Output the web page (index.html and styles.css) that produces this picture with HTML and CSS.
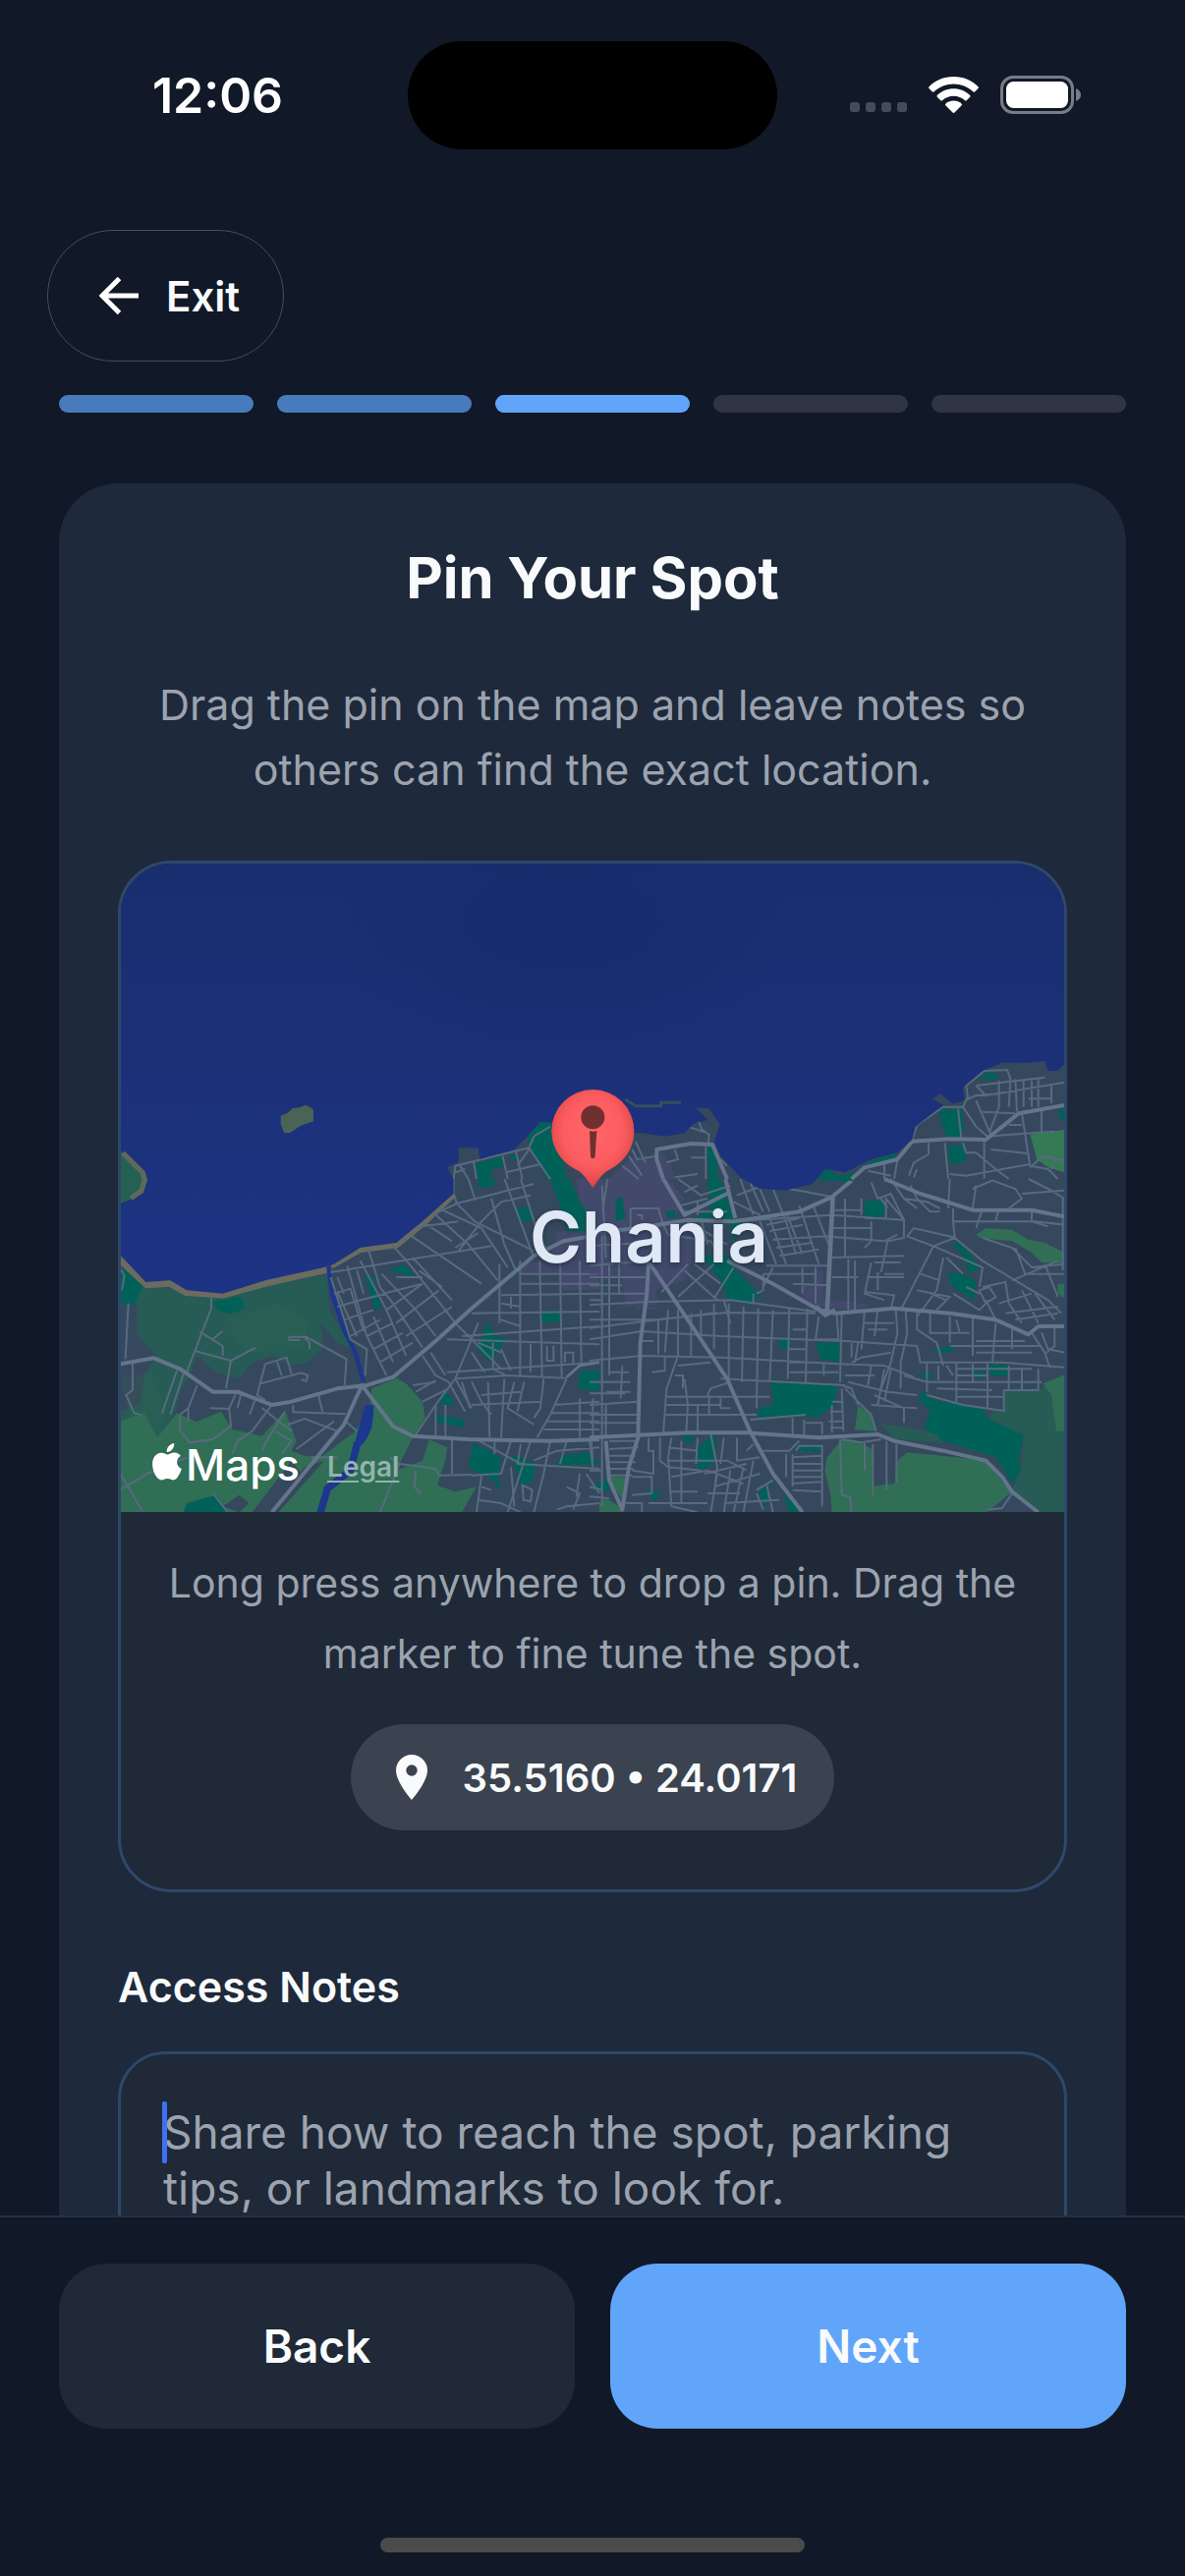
FILE: index.html
```html
<!DOCTYPE html>
<html lang="en">
<head>
<meta charset="utf-8">
<meta name="viewport" content="width=device-width, initial-scale=1">
<title>Pin Your Spot</title>
<link rel="stylesheet" href="styles.css">
</head>
<body>
<div class="app">
  <div class="status">
    <div class="status-time">12:06</div>
    <div class="island"></div>
    <div class="status-icons">
      <svg class="cell" viewBox="0 0 58 10" aria-hidden="true"><g fill="#454b59"><rect width="10" height="10" rx="3"/><rect x="16" width="10" height="10" rx="3"/><rect x="32" width="10" height="10" rx="3"/><rect x="48" width="10" height="10" rx="3"/></g></svg>
      <svg class="wifi" viewBox="0 0 51 37" aria-hidden="true"><g fill="#fff"><path d="M25.500 0C35.500 0 44.500 4 50.500 10.200Q51.300 11 50.500 11.900L47 15.400Q46.200 16.100 45.300 15.300C40 10.300 33 7.400 25.500 7.400S11 10.300 5.700 15.300Q4.800 16.100 4 15.400L.5 11.900Q-.3 11 .5 10.200C6.500 4 15.500 0 25.500 0Z"/><path d="M25.500 12.300C32 12.300 38 14.900 42.200 19Q43 19.900 42.200 20.700L38.700 24.200Q37.900 24.900 37 24.200C33.900 21.400 29.900 19.700 25.500 19.700S17.100 21.400 14 24.200Q13.100 24.900 12.300 24.200L8.800 20.700Q8 19.900 8.800 19C13 14.900 19 12.300 25.500 12.300Z"/><path d="M25.500 24.500C28.600 24.500 31.500 25.700 33.700 27.700Q34.500 28.500 33.700 29.300L26.500 36.500Q25.500 37.300 24.500 36.500L17.300 29.300Q16.500 28.500 17.300 27.700C19.500 25.700 22.400 24.500 25.500 24.500Z"/></g></svg>
      <svg class="battery" viewBox="0 0 82 39" aria-hidden="true"><rect x="1.500" y="1.500" width="72" height="36" rx="11.500" fill="none" stroke="#777c87" stroke-width="3"/><rect x="6" y="6" width="63" height="27" rx="7.500" fill="#fff"/><path d="M77 13Q82 15 82 19.500T77 26Z" fill="#777c87"/></svg>
    </div>
  </div>

  <header class="topbar">
    <button class="exit" type="button">
      <svg viewBox="0 0 40 40" aria-hidden="true"><path d="M40 20H4M20.500 2.500 3 20l17.500 17.500" fill="none" stroke="#fff" stroke-width="5"/></svg>
      Exit
    </button>
  </header>

  <ol class="steps" aria-label="Step 3 of 5">
    <li class="step step-done"></li>
    <li class="step step-done"></li>
    <li class="step step-current"></li>
    <li class="step"></li>
    <li class="step"></li>
  </ol>

  <main class="scroll">
    <section class="card">
      <h1 class="title">Pin Your Spot</h1>
      <p class="lead">Drag the pin on the map and leave notes so others can find the exact location.</p>

      <div class="picker">
        <div class="map">
          <svg class="map-art" viewBox="0 0 2880 1980" preserveAspectRatio="xMidYMid slice" role="img" aria-label="Map of Chania">
            <defs>
              <linearGradient id="sea" x1="0" y1="0" x2="0" y2="1"><stop offset="0" stop-color="#192e6e"/><stop offset=".3" stop-color="#1c3078"/><stop offset=".65" stop-color="#1d3484"/><stop offset="1" stop-color="#1c368c"/></linearGradient>
              <radialGradient id="deep"><stop offset="0" stop-color="#152b6a" stop-opacity=".8"/><stop offset="1" stop-color="#152b6a" stop-opacity="0"/></radialGradient>
              <radialGradient id="pin" cx=".5" cy=".42" r=".6"><stop offset="0" stop-color="#ff6668"/><stop offset=".6" stop-color="#fc5c60"/><stop offset="1" stop-color="#d9413f"/></radialGradient>
              <clipPath id="land"><path d="M0 1198 76 1278 151 1273 201 1303 311 1313 441 1273 621 1233 651 1223 731 1173 841 1158 921 1093 1016 1008V963L996 928 1031 913V868H1091L1096 903 1201 873 1251 823 1281 788 1321 793 1480 760 1566 823 1591 823 1661 833 1721 823 1751 793 1791 783 1756 745 1796 748 1829 798 1811 848 1831 893 1891 958 1951 993 2031 998 2111 978 2151 933 2211 943 2291 903 2371 883 2416 843 2426 803 2491 753 2511 738 2479 718 2501 703 2541 733 2576 723 2571 683 2631 633 2691 608 2771 608 2821 603 2831 633 2861 633 2880 613V1980H0Z"/></clipPath>
            </defs>
            <rect width="2880" height="1980" fill="url(#sea)"/>
            <ellipse cx="1350" cy="200" rx="700" ry="400" fill="url(#deep)"/>
            <path d="M488 770 508 762 525 747 545 745 565 737 588 750V787L550 800 515 823 498 822 488 796Z" fill="#4b6257"/>
            <path d="M0 877 68 940V1000L30 1025 0 1038Z" fill="#256052"/><path d="M6 884 66 943 73 965 62 1000 30 1022" fill="none" stroke="#5d6a59" stroke-width="16"/>
            <path d="M1540 720 1572 740H1649V730H1711" fill="none" stroke="#35505e" stroke-width="9"/>
            <g clip-path="url(#land)">
              <rect width="2880" height="1980" fill="#36485d"/>
              <g transform="translate(-39 963)">
                <path fill="#275b55" d="M38 290 110 320 240 345 350 355 500 320 668 292 676 400 700 440 745 520 700 500 650 440 655 520 610 560 560 570 500 540 440 560 400 610 330 590 270 540 250 600 225 640 200 720 150 790 105 740 38 740 38 710 100 690 110 600 150 540 90 480 90 380 38 360Z"/>
                <path fill="#30704f" fill-opacity=".2" d="M350 430 520 380 610 430 600 520 420 530ZM40 600 130 590 180 700 150 780 60 720Z"/>
                <path fill="#306e56" d="M38 740 110 715 150 788 210 715 270 742 345 710 380 765 470 785 540 708 560 760 575 800 560 830 600 845 650 850 755 770 800 700 805 640 880 608 910 625 960 680 968 730 930 790 880 890 960 860 980 795 1035 820 1030 860 1005 935 1060 955 1125 940 1080 1018H490L590 900 560 860 440 1018H38Z"/>
                <path fill="#36485d" d="M600 880 660 860 520 1018H490ZM350 1000 400 965 430 990 400 1018Z"/>
                <path fill="#006159" d="M38 275 80 285 105 330 80 385 38 380ZM320 375 405 358 418 395 375 412 335 402ZM240 990 330 965 365 1018H230ZM785 298 810 295 835 395 815 402ZM850 278 905 262 940 300ZM1245 90 1295 85 1300 130 1250 130ZM1130 0H1185L1175 25H1130ZM1350 0H1410L1440 70 1500 110V170L1400 165 1380 80ZM1320 405 1390 400 1385 435 1325 440ZM1160 435 1185 480 1215 485 1170 560 1125 520ZM1030 642 1060 690 1010 690ZM1005 720 1090 735 1085 760 1005 742ZM1115 805 1200 850 1190 930 1100 880ZM1230 840 1310 870 1290 930 1260 935ZM1440 585H1500V648L1435 640ZM1380 845 1470 835 1500 870 1370 875ZM1170 900 1210 950 1185 940Z"/>
                <path fill="#474a70" opacity=".75" d="M1430 0H1500V340H1380V290H1260V255H1350L1370 160H1500L1440 70Z"/>
                <path fill="none" stroke="#6b6b60" stroke-width="34" d="M38 240 120 316 190 312 240 340 350 347 480 312 600 285 680 268"/>
                <path fill="none" stroke="#6b6b60" stroke-width="22" d="M680 264 770 214 880 200 960 135 1055 45"/>
                <path fill="none" stroke="#1c378f" stroke-width="13" d="M672 262 684 350 720 460 755 530 780 620"/>
                <path fill="none" stroke="#1c378f" stroke-width="22" d="M800 690Q800 780 760 810L740 890 670 945 648 1020"/>
                <path fill="#1c378f" d="M785 690H805V760L775 800H755Z"/>
                <g class="minor">
                  <path d="M62 380 53 550M75 560V645L55 660 80 715 100 720M38 275 50 295 42 340M315 360V395L265 525 240 590M265 525 375 555 450 515M375 555 360 640M280 467 318 490 350 465M318 490 350 510V540M210 585 165 715M230 595 190 720M272 630 245 700V740M245 700 220 720V770L250 805 320 795 375 755 370 700 390 655M310 700 370 702M405 660 395 700M450 670 432 720M500 690 440 770 395 800 380 840M470 700 560 770M600 480 728 550 722 630M600 482H553V492H585M600 485 615 500V520M480 565 545 545 560 595M480 565 455 660 480 675M465 625 590 592 610 600 605 618 590 612M515 555 530 600M565 690V712L725 718M640 652 655 712M550 750 600 732 700 770 650 830M575 825 690 740M540 710 490 790 470 830M510 770 560 800 530 840M38 900 105 1015M38 950 120 900 240 850M320 960 365 1018M725 740 760 770M830 1018 890 870 860 850M890 870 1000 885 1010 905 1110 903M940 890 935 940 955 960M620 850H700"/>
                  <path d="M680 285 1170 205M690 350 740 335 780 465M700 345 760 480M730 265 790 480 850 600M770 250 850 400 880 470 910 540M795 215 830 330 870 380 930 470 960 515M835 290 940 400 1000 480M870 205 920 260 990 350 1060 440M880 300 960 300M930 240 1050 370M920 170 1140 320M990 100 1100 200 1190 310M1010 90 1140 150 1220 270M1060 70 1120 130 1180 160 1300 220M1055 0V45L1065 75 1300 15M1100 0 1120 60M1170 60 1210 200 1245 280M1210 0 1240 80 1300 240M1260 0 1310 160 1345 230M1065 75 1010 100M900 190 920 150 1070 130M960 130 1050 190M1130 140 1200 70 1290 50M1070 220 1140 130M1130 165 1060 210M700 390 770 370 850 350M720 430 810 400M740 480 830 430M790 480 870 440M810 520 900 470M830 560 930 500M850 400 960 320M880 440 1010 340M910 480 1050 390M950 280 1020 330M810 420 870 560M840 350 960 320M700 300 720 350M760 280 780 350M680 300 740 490 790 520 785 600"/>
                  <path d="M1195 260V440M1258 250V600M1318 250 1325 605M1380 250 1385 605M1440 250 1445 560M1260 290H1500M1260 320H1500M1200 355 1500 350M1110 410 1500 405M1080 480 1500 450M1035 490 1500 505M1200 380 1260 390M1230 360V395M1200 430 1260 450M1060 610 1220 600 1400 608M1035 590 1500 560M1175 500V580L1215 600M1200 520 1230 585M1290 505V590M1340 510V555H1360V510M1395 560V530H1420V565M1130 440 1060 610 1000 690 940 780M1060 440 1200 580M1130 500 1200 530M1110 530 1150 590M960 540 1000 600 1040 620 1090 710M985 530 1030 600M1000 620 930 630M940 650 1000 615M960 680 1040 640M1060 610 1110 700M1080 620 1105 700M1110 620 1140 680 1170 720M1160 620 1165 790M1210 610 1200 790M1240 620 1220 700 1300 750M1270 620 1250 710M1330 610 1320 700 1300 730M1140 660 1260 650M1110 690 1320 680M1000 690V790M1030 690V785M1400 610 1350 720 1310 790M1350 715H1500M1340 740H1500M1330 765H1500M1360 690 1500 680M1440 670V790M1480 670V790"/>
                  <path d="M1050 790V900M1115 790 1260 870M1180 800V840M1230 800 1200 900 1110 905M1260 810 1250 870 1500 885M1290 800 1220 1018M1350 800 1330 900 1300 1018M1300 860 1370 830 1500 820M1400 800 1380 870M1470 800 1480 880M1140 905 1125 1018M1140 940 1170 950M1130 980 1200 990 1260 1018M1230 880 1240 1000M1265 935 1295 950 1290 985 1268 980ZM1400 940 1440 960 1420 1010M1370 1010 1400 1000 1500 990M1440 900 1430 970M1460 900 1500 960"/>
                </g>
                <g class="major">
                  <path d="M38 565 140 547 220 580 320 650H395L500 690 560 680 700 640 790 630 870 605 1000 495 1110 395 1300 235 1390 190 1500 170"/>
                  <path d="M500 1018 720 750 775 630 870 755 930 785 1100 795 1350 800 1500 795"/>
                  <path d="M1500 560 1440 570 1400 605" stroke-width="8"/>
                </g>
              </g>
              <g transform="translate(1431 963)">
                <path fill="#474a70" opacity=".75" d="M30 0H240L290 60 260 120 330 200 290 310 200 340 210 385 110 390 100 300 0 290V160L30 90ZM680 280H715V370L760 370 860 385 820 400 680 390 650 355V320H680ZM140 390H200V400H140Z"/>
                <path fill="#006159" d="M360 0H400L440 120H320L370 90ZM340 235H440L440 270 500 330 520 355 495 385 425 370 400 310ZM425 120 470 120 440 200ZM840 65 900 65 910 85 893 118 838 113ZM710 0H800L790 10ZM555 620 755 630 750 690 700 725 510 728 520 700 560 690ZM575 488 620 490 605 518 580 518ZM688 500H762V557L710 553ZM1000 670 1020 650 1050 675 1200 700 1220 735 1325 780 1310 850 1318 890 1290 930 1240 850 1080 800 1020 760 1040 710ZM1105 200 1130 195 1195 270 1160 290 1140 235ZM1090 285 1140 290 1180 310 1175 370 1140 350 1110 330ZM1045 522 1120 508 1110 525 1060 535ZM1222 565 1280 570 1275 602 1222 600ZM1170 585 1210 590 1200 610 1170 600ZM1010 590 1050 595 1040 608H1010ZM0 585 30 590 20 640H0ZM280 785H320V805H290ZM330 820 370 785 390 790 380 870 330 895ZM640 815 710 820 700 835 630 830ZM515 960 550 925 545 1005ZM590 960 650 1018H610ZM170 950 220 955 200 985ZM20 930 70 910 60 955 20 950ZM230 100 265 95 260 120H240ZM80 60 100 55 110 120 80 130Z"/>
                <path fill="#306e56" d="M1180 170 1210 150 1290 155 1340 185 1390 195 1450 225V258L1380 255 1350 225 1290 190 1190 180ZM1430 320H1450V365L1430 350ZM820 690 860 720 875 770 810 765ZM30 990 50 975 90 1000 100 1018H30ZM60 910 115 910 100 980 75 940ZM770 795 725 850 718 890 735 960 740 1018H1210L1290 960 1210 860 1120 850 970 835 940 860 930 930 880 935 860 900 870 830 820 800Z"/>
                <path fill="#275b55" d="M1265 645 1380 645 1400 615 1450 600V1018H1380L1290 950 1318 890 1325 780 1220 735 1230 705 1265 708ZM890 750 960 755 1060 780 1080 805 930 795Z"/>
                <path fill="#306e56" d="M1385 625 1450 598V770H1425L1410 660Z"/>
                <path fill="#36485d" d="M865 810 930 810 935 925 865 940ZM1215 1018 1290 955 1375 1018Z"/>
                <g class="minor">
                  <path d="M38 20 50 240M38 170V1000M0 205 160 195M55 0 40 95M0 265 180 250M0 300H170M0 325H100M0 350H170M90 240V350M125 90H210L225 140 240 170M125 90V150M145 110H160V125M0 385 180 375 430 370 690 405M0 430 200 430 300 420 420 408 690 410M0 455 390 408M0 490 160 465 400 480 780 495M0 555 160 540 400 545 760 565 900 570 990 605M60 260V600M210 430V535M240 400 230 530M270 400V540L235 640 225 780M310 410V540M340 400V480M380 380V520M425 380V610M470 390 465 620M515 395 510 700M560 400 550 620M610 395 605 610M665 395 660 620M700 420 690 490H760L755 415M770 410 765 620M800 500V545M400 610 780 630M610 590H760M610 560H690M610 520H660M715 565V600M620 460H665M235 665H550M270 570 370 560M260 600H285V640M230 690 400 690M230 720H510M360 660 370 640 430 620M365 660V720M400 670V700H430M330 690V780M290 610 300 690 295 775M190 590 230 585V540M160 495H195M0 655H110M0 620H60M60 590H120M50 620H125M50 650H125M100 570 95 670M0 690 145 680M0 720H145M0 745H145M50 690V760"/>
                  <path d="M270 0 340 50 430 20M290 40 330 20M280 80 360 60M290 100H420M330 110V70M440 70 520 110M450 50 530 20 640 35 740 55M460 0 500 110M490 10 530 100M520 30 550 100M560 30 600 130 630 230M600 100 650 230M550 120 600 260M520 130 570 260M540 140 640 120M550 160 650 140M560 185 720 175 900 190 940 170M570 210 680 195M580 235 700 215M440 130 740 110 960 125M640 80 700 260M680 75 730 200M540 265H730M530 290H690M690 270V380M650 270V350M560 270 530 330M620 320 730 325M780 60V240M740 150H860M830 60V110M740 95H830M840 120H905V60L960 125V180L910 190 890 285M860 130V190M840 210 860 190M870 255H950M740 240 960 235M860 255 840 350 900 370M850 300H960M840 345 930 355 920 400M880 285V340M960 290H900M740 300H820M790 245V400M810 250V400"/>
                  <path d="M860 10 880 60 920 45 960 125M890 60 910 90M920 0 960 60 1000 90M960 60 1030 70 1070 90M1100 0 1095 90M1110 90 1110 130 1200 130 1360 130 1450 140M1110 130 1115 180 1050 205 970 175 990 150 1120 180M980 20 1000 60 1040 100H1070M1180 20 1170 90M1170 30 1230 5 1300 30 1320 60 1280 90M1320 45 1450 35M1340 0 1400 30 1450 60M1200 90 1180 150M1250 90 1240 130M1350 95V130L1400 145M1445 60V280M1115 180 1200 250 1300 310 1400 370 1440 410M1200 180 1290 210 1350 270 1450 260M1300 210 1330 290H1450M1290 310 1430 250M1390 260 1430 360M1050 205 950 400M1050 205 1200 270 1190 330M1010 290 1070 310M1080 240 1060 340 1000 420M1090 240 1140 290M1200 330 1270 315 1280 380 1320 440M1210 370 1240 430M1190 340 1220 330 1240 360 1210 380ZM1110 350 1190 400 1220 370M1250 380 1350 350M1270 410 1430 390M1300 430 1430 410M1320 340 1370 440M1360 350 1420 430M1150 330 1190 350M1040 350 1090 370M1000 340 1100 360 1060 400"/>
                  <path d="M840 400 830 520M880 400 870 480M840 440H930M850 460H910M935 400 940 470 920 560 890 640M965 400 970 470 950 560 950 640M1000 400V460L1060 500 1080 570M1040 410V470H1160M1100 420V500M1120 430 1130 470M1170 420V540M1240 440 1230 560M1290 460V520M1350 470 1390 530 1405 575M1180 495H1330M1100 510H1380M1180 530H1350M780 495 1000 510 1010 560 1260 560 1450 575M800 560 830 545 920 530M820 500 810 560M860 570 850 630M900 580 880 690M920 580 900 680M780 600H870M790 620 910 650 1000 660M960 600 1030 620 1380 620M1030 560V650M1120 560V680M1170 565V620M1215 565V700M1280 570V645M1320 580V645M1370 580V645L1265 645V708L1140 690 1030 660M1060 640 1230 645M1120 600H1215M1120 580H1350M1065 570V615M1090 570 1110 600M1120 665H1265M1380 470 1400 520 1450 530M1420 455V510L1395 530M860 690 1000 700M870 660 960 700V745M820 690 800 640 770 630M780 640 860 720 875 770M770 640 775 770M740 680H775M735 710H775M730 740H775M735 760H775M740 690V775M490 735 660 720M620 725V780M655 735V780M660 745H710V780M530 830H610L640 800M630 830 640 815H710V1000M620 850 710 845M620 870H710M620 890H710M620 910H710M620 930 710 925M620 950 710 955M620 840V940M600 840V910M765 795 770 965 795 970 800 1015M770 795 830 805 890 795M840 800V890M865 810V965M907 800V950M937 810V925"/>
                  <path d="M60 800H150M60 825 150 820M60 845H140M60 865H140M60 885H135M60 905H130M0 970 60 975M0 940 40 950M0 890H40M5 800 10 860M50 700V790M180 790V830H195V900L130 890M130 910H190V960L130 965M110 990H160V1018M215 790V860L240 880M250 790 240 850 250 1000M280 800V990M330 790 325 870M350 900 480 870M240 820 330 830M240 860H420L480 890M240 880 340 890M250 910 360 890 470 930M250 955H330M370 780 390 880 380 960M410 790 400 870M450 790V860L520 850M480 830 500 810M390 900 370 1018M430 890 410 1018M470 880 440 1018M500 860 470 1018M380 940 520 900M360 960 460 960M540 930 560 1018M410 990 580 980M180 990H360M250 1000 330 1018M510 960 530 1010M560 920 510 950"/>
                  <path d="M220 345 300 260M270 360 380 260M380 365 440 270M410 370 430 440M290 280 390 370M320 260 400 320M500 350V380M510 350 530 340V290M0 370H40M240 170 370 190 400 240M300 130 420 200M340 120 360 200M1215 1010 1260 1005 1290 960"/>
                </g>
                <g class="major">
                  <path d="M0 790 300 775H480L700 790 880 780 930 800 1080 830 1210 860 1260 910 1290 955 1370 1018"/>
                  <path d="M180 255 175 350 155 500 148 790 120 880 100 1010 60 920 50 800M185 260 300 430 420 610 490 770 560 900 650 1018M420 250 560 320 700 400 750 410 930 395 1100 410 1240 430 1340 475 1370 450H1450"/>
                  <path d="M743 50 725 410M690 390 720 415 750 400" stroke-width="14"/>
                  <path d="M0 165 150 150 300 125 440 130 640 100 740 55 800 5M900 0 1010 45 1170 95H1350L1450 115"/>
                  <path d="M225 0 290 110 430 40M415 0 445 120"/>
                </g>
              </g>
              <g transform="translate(-39 -57)">
                <path fill="#006159" d="M1280 890 1320 840 1370 850 1400 1020H1340L1290 930ZM1120 975 1200 950 1205 985 1175 990 1165 1020H1130ZM1225 945H1250V965L1230 960Z"/>
                <path class="minor" d="M1055 1020 1060 980 1285 925 1300 890 1350 860M1115 965 1125 1020M1205 950 1220 1020M1245 935 1265 1020M1285 925 1350 1020M1285 930 1250 980M1215 1000 1320 975M1075 980 1100 1020M1060 1000 1090 990"/>
              </g>
              <g transform="translate(1431 -57)">
                <path fill="#474a70" opacity=".75" d="M60 1020 130 950 200 960 220 940 250 980 260 1020Z"/>
                <path fill="#006159" d="M358 920 378 915 392 960 390 1020H365ZM1065 810 1135 805 1145 870 1130 892H1090L1075 850ZM1095 920 1140 915 1150 960 1130 973H1098ZM1185 715 1215 695 1250 700 1240 718ZM700 1000 730 990 760 1010 820 1000 800 1025H700ZM860 965 940 935 935 955 840 985ZM1435 800H1450V840H1435Z"/>
                <path fill="#347a55" d="M1345 885 1450 870V1000L1400 985 1365 960 1355 920Z"/>
                <g class="minor">
                  <path d="M330 835 345 875 300 860M345 870 365 885 362 915M355 920V1020M310 955H355M260 930 270 960 235 970M120 950 160 1010M140 905 170 970M130 930 145 960 205 950M100 980 150 1020M260 1015 330 1005M400 960 420 980M1155 770 1150 735 1205 690 1275 687 1285 715M1180 735 1390 710M1180 735 1210 765 1450 725M1145 780 1180 765 1250 760M1140 800 1155 770M1140 800 1180 860 1215 890M1180 780 1225 885M1250 720 1250 800 1220 880M1285 715 1280 800M1300 715 1305 815M1325 715V800M1350 715V800M1370 715V800M1410 735V790M1200 815 1300 820M1340 775H1410M1280 855H1320M1380 810V875M1320 820 1345 980 1400 990 1430 1020M1215 890 1420 875M1205 905V1020M1225 930 1335 942M1125 805 1135 895M1085 910 1095 1020M1140 910 1150 940 1180 940 1240 990 1280 1020M1100 1005 1150 1010 1345 975M1345 985 1385 950 1450 965M1420 960 1410 990M1035 910 1035 945 990 970 975 1010M1000 990 990 1015M940 960 930 1020M900 970V1020M850 995 920 1010M985 900 1000 855 1080 800H1145"/>
                </g>
                <path class="major" d="M225 1020 205 960V930L310 912 375 915 420 1020M800 1020 840 985 940 960 985 905 1100 898 1210 900 1310 820 1450 795"/>
              </g>
            </g>
            <path d="M1441 690A126 126 0 0 1 1567 816C1567 880 1525 920 1485 938Q1468 948 1441 990Q1414 948 1397 938C1357 920 1315 880 1315 816A126 126 0 0 1 1441 690Z" fill="url(#pin)"/>
            <circle cx="1441" cy="775" r="36" fill="#71302f"/>
            <path d="M1431 816Q1442 821 1453 816L1448 894Q1447 901 1441 901T1434 894Z" fill="#71302f"/>
          </svg>
          <span class="map-city">Chania</span>
          <div class="map-credit">
            <span class="map-brand">
              <svg viewBox="0 0 29 37" aria-hidden="true"><path fill="#fff" d="M21.500 0C22 4.500 18.500 9 14.300 8.700C13.800 4.500 17.500.5 21.500 0ZM14.900 11.200C16.500 11.200 18.500 9.300 21.800 9.300C24.500 9.300 26.700 10.700 28 12.600C22.500 15.600 23.500 23.300 29 25.400C27.500 29.700 24.500 36.500 21 36.500C18.800 36.500 17.800 35.100 15 35.100S11 36.500 9.100 36.500C4.500 36.500 0 28 0 20.700C0 13.500 4.500 9.600 8.800 9.600C11.500 9.600 13.600 11.200 14.900 11.200Z"/></svg>
              Maps
            </span>
            <a class="map-legal" href="#legal">Legal</a>
          </div>
        </div>
        <div class="picker-info">
          <p class="hint">Long press anywhere to drop a pin. Drag the marker to fine tune the spot.</p>
          <div class="chip">
            <svg viewBox="0 0 32 46" aria-hidden="true"><path fill="#f9fafb" fill-rule="evenodd" d="M16 0A16 16 0 0 1 32 16C32 28 16 46 16 46S0 28 0 16A16 16 0 0 1 16 0ZM16 10.300A5.700 5.700 0 1 0 16 21.700 5.700 5.700 0 1 0 16 10.300Z"/></svg>
            35.5160 • 24.0171
          </div>
        </div>
      </div>

      <label class="label" for="notes">Access Notes</label>
      <div class="field">
        <textarea id="notes" class="notes" placeholder="Share how to reach the spot, parking tips, or landmarks to look for."></textarea>
        <span class="caret"></span>
      </div>
    </section>
  </main>

  <footer class="footer">
    <div class="actions">
      <button class="btn btn-back" type="button">Back</button>
      <button class="btn btn-next" type="button">Next</button>
    </div>
    <div class="home"></div>
  </footer>
</div>
</body>
</html>
```
FILE: styles.css
```css
* {
  box-sizing: border-box;
}

body {
  margin: 0;
  background: #111827;
  color: #f9fafb;
  font-family: Inter, "Liberation Sans", sans-serif;
}

button,
textarea {
  font: inherit;
  color: inherit;
}

.app {
  display: flex;
  flex-direction: column;
  height: 100vh;
  overflow: hidden;
}

/* Status bar */
.status {
  display: grid;
  grid-template-columns: 1fr 376px 1fr;
  align-items: center;
  padding: 42px 0 0;
}

.status-time {
  padding-left: 28px;
  text-align: center;
  font-size: 50px;
  font-weight: 600;
  line-height: 60px;
  color: #fff;
}

.island {
  height: 110px;
  border-radius: 55px;
  background: #000;
}

.status-icons {
  display: flex;
  align-items: center;
  justify-content: flex-end;
  gap: 22px;
  padding: 0 106px 2px 0;
}

.cell {
  width: 58px;
  height: 10px;
  margin-top: 26px;
}

.wifi {
  width: 51px;
  height: 37px;
}

.battery {
  width: 82px;
  height: 39px;
}

/* Header */
.topbar {
  padding: 82px 48px 34px;
}

.exit {
  display: flex;
  align-items: center;
  gap: 28px;
  height: 134px;
  padding: 0 44px 0 52px;
  border: 1px solid #454c5a;
  border-radius: 67px;
  background: none;
  font-size: 42px;
  font-weight: 600;
}

.exit svg {
  width: 40px;
  height: 40px;
}

.steps {
  display: flex;
  gap: 24px;
  margin: 0;
  padding: 0 60px;
  list-style: none;
}

.step {
  flex: 1;
  height: 18px;
  border-radius: 9px;
  background: #303543;
}

.step-done {
  background: #487bbb;
}

.step-current {
  background: #60a5fa;
}

/* Scrolling content */
.scroll {
  flex: 1;
  min-height: 0;
  overflow: hidden;
  padding: 72px 60px 0;
}

.card {
  padding: 60px;
  border-radius: 60px;
  background: #1e293b;
}

.title {
  margin: 0;
  text-align: center;
  font-size: 58px;
  font-weight: 700;
  line-height: 72px;
}

.lead {
  margin: 60px 0;
  text-align: center;
  font-size: 43px;
  line-height: 66px;
  color: #9ca3af;
}

.picker {
  overflow: hidden;
  border: 3px solid #2e486b;
  border-radius: 54px;
  background: #1f2937;
}

.map {
  position: relative;
  height: 660px;
}

.map-art {
  display: block;
  width: 100%;
  height: 100%;
}

.minor {
  fill: none;
  stroke: #586a7f;
  stroke-width: 6;
}

.major {
  fill: none;
  stroke: #64758b;
  stroke-width: 12;
  stroke-linejoin: round;
}

.map-city {
  position: absolute;
  top: 336px;
  left: 416px;
  font-size: 72px;
  font-weight: 600;
  line-height: 88px;
  color: #dfe8f4;
  text-shadow: 0 2px 5px #26344a;
}

.map-credit {
  position: absolute;
  bottom: 18px;
  left: 32px;
  display: flex;
  align-items: center;
  gap: 28px;
}

.map-brand {
  display: flex;
  align-items: center;
  gap: 4px;
  font-size: 44px;
  font-weight: 500;
  line-height: 60px;
  color: #fff;
}

.map-brand svg {
  width: 30px;
  height: 38px;
  margin-bottom: 6px;
}

.map-legal {
  padding-top: 4px;
  font-size: 28px;
  font-weight: 600;
  line-height: 36px;
  color: #93b3ab;
  text-underline-offset: 4px;
}

.picker-info {
  display: flex;
  flex-direction: column;
  align-items: center;
  padding: 36px 42px 60px;
}

.hint {
  margin: 0 0 36px;
  text-align: center;
  font-size: 41px;
  line-height: 72px;
  color: #9ca3af;
}

.chip {
  display: flex;
  align-items: center;
  gap: 36px;
  height: 108px;
  padding: 0 38px 0 46px;
  border-radius: 54px;
  background: #3a434f;
  font-size: 40px;
  font-weight: 600;
}

.chip svg {
  width: 32px;
  height: 46px;
}

.label {
  display: block;
  margin: 68px 0 38px;
  font-size: 43px;
  font-weight: 600;
  line-height: 56px;
}

.field {
  position: relative;
}

.notes {
  display: block;
  width: 100%;
  height: 360px;
  padding: 51px 43px;
  border: 3px solid #2e486b;
  border-radius: 48px;
  outline: 0;
  background: #1f2937;
  font-size: 46px;
  line-height: 57px;
  resize: none;
}

.notes::placeholder {
  color: #9ca3af;
  opacity: 1;
}

.caret {
  position: absolute;
  top: 51px;
  left: 45px;
  width: 5px;
  height: 63px;
  border-radius: 2px;
  background: #4070f4;
}

/* Footer */
.footer {
  padding: 47px 60px 24px;
  border-top: 2px solid #243145;
  background: #111827;
}

.actions {
  display: flex;
  gap: 36px;
}

.btn {
  flex: 1;
  height: 168px;
  border: 0;
  border-radius: 48px;
  font-size: 46px;
  font-weight: 600;
}

.btn-back {
  background: #1f2937;
}

.btn-next {
  background: #60a5fa;
}

.home {
  width: 432px;
  height: 15px;
  margin: 111px auto 0;
  border-radius: 8px;
  background: #4b4b4b;
}
```
